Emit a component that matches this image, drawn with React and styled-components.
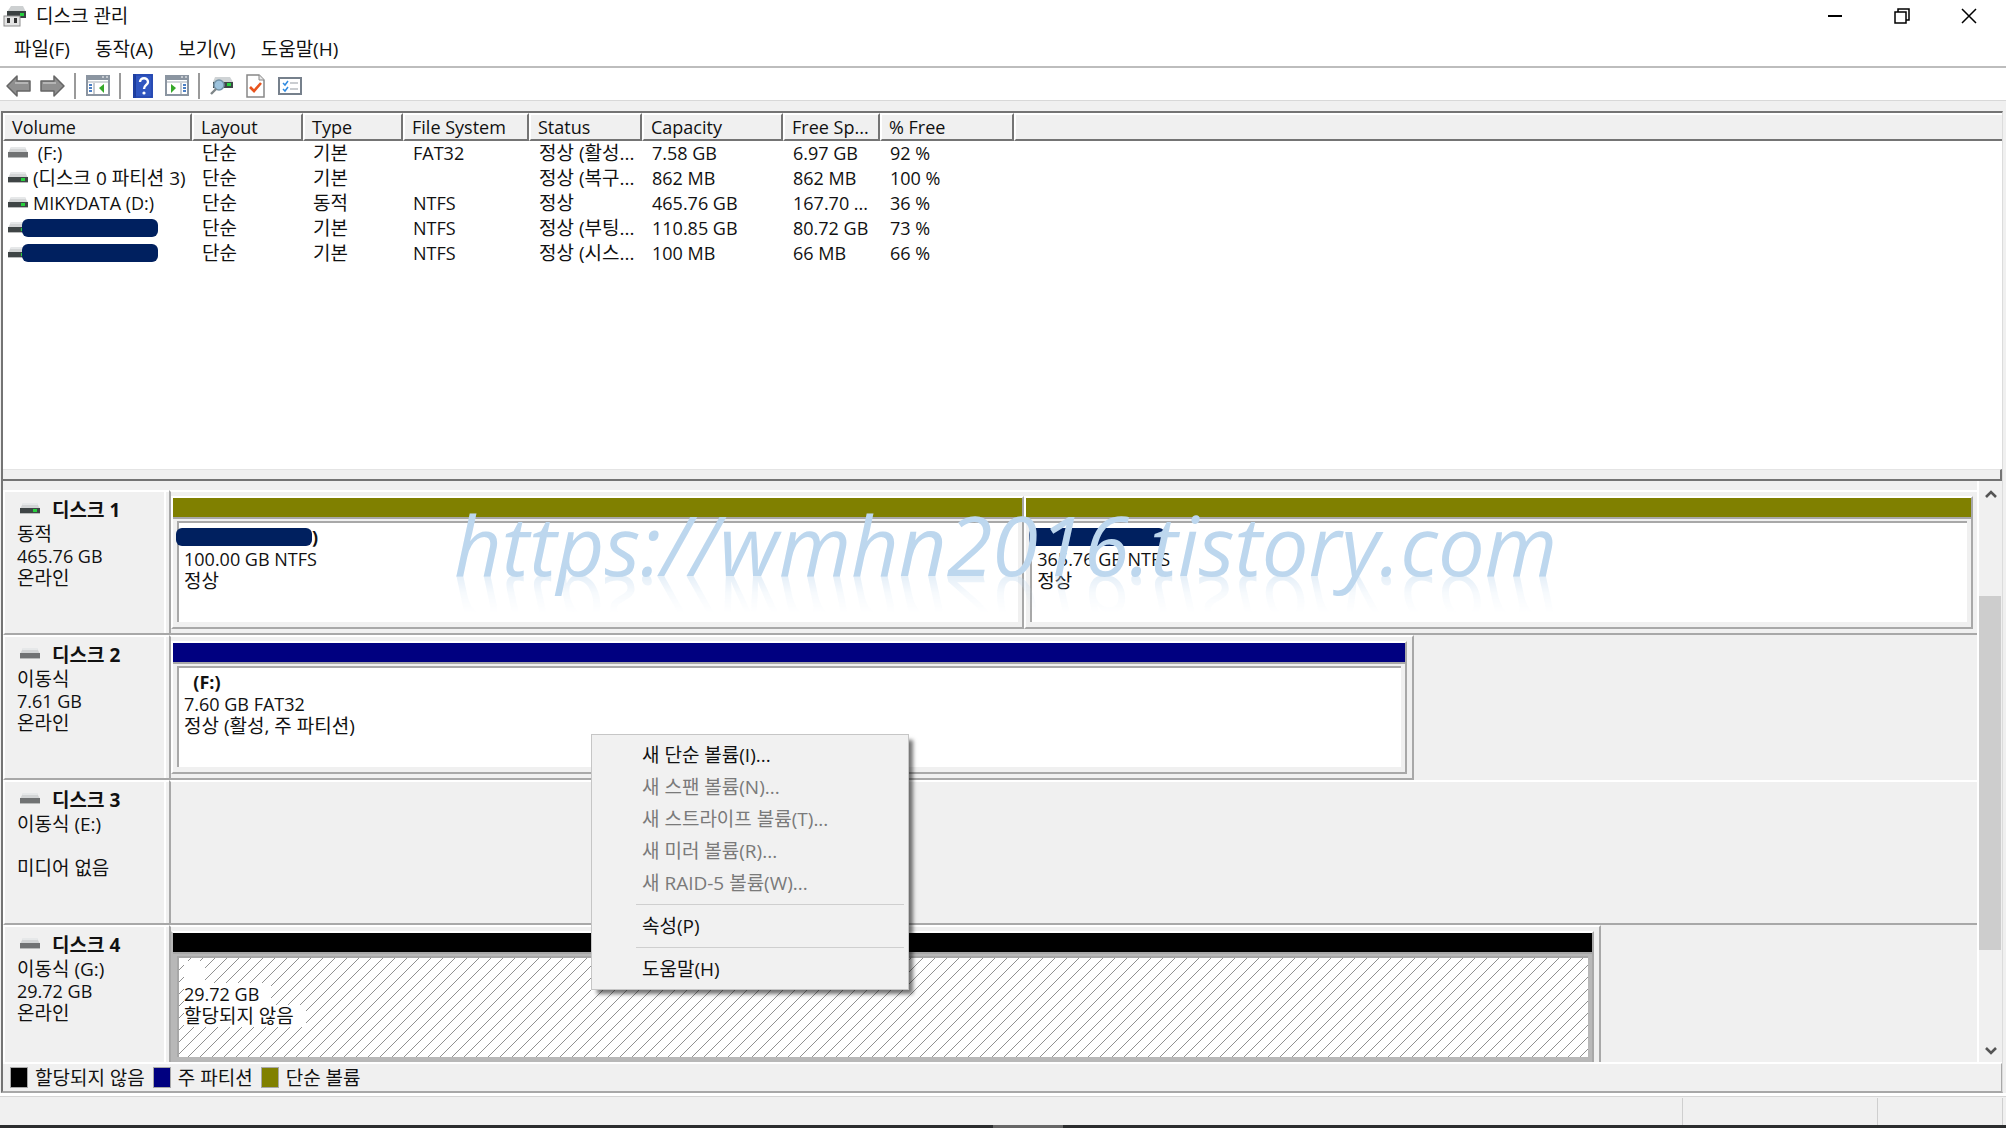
import React from 'react'
import styled, { createGlobalStyle } from 'styled-components'

const colors = {
  face: '#f0f0f0',
  white: '#ffffff',
  text: '#111111',
  disabled: '#7a7a7a',
  line: '#a8a8a8',
  dark: '#747474',
  olive: '#808000',
  navy: '#000080',
  black: '#000000',
  cover: '#00205f',
  watermark: '#bdd7ee',
}

const volumes = [
  { name: '\u00a0(F:)', layout: '단순', type: '기본', fs: 'FAT32', status: '정상 (활성...', capacity: '7.58 GB', free: '6.97 GB', percent: '92 %' },
  { name: '(디스크 0 파티션 3)', lit: true, layout: '단순', type: '기본', fs: '', status: '정상 (복구...', capacity: '862 MB', free: '862 MB', percent: '100 %' },
  { name: 'MIKYDATA (D:)', lit: true, layout: '단순', type: '동적', fs: 'NTFS', status: '정상', capacity: '465.76 GB', free: '167.70 ...', percent: '36 %' },
  { covered: true, lit: true, layout: '단순', type: '기본', fs: 'NTFS', status: '정상 (부팅...', capacity: '110.85 GB', free: '80.72 GB', percent: '73 %' },
  { covered: true, lit: true, layout: '단순', type: '기본', fs: 'NTFS', status: '정상 (시스...', capacity: '100 MB', free: '66 MB', percent: '66 %' },
]

const columns = [
  { label: 'Volume', width: 189 },
  { label: 'Layout', width: 111 },
  { label: 'Type', width: 100 },
  { label: 'File System', width: 126 },
  { label: 'Status', width: 113 },
  { label: 'Capacity', width: 141 },
  { label: 'Free Sp...', width: 97 },
  { label: '% Free', width: 134 },
]

const disks = [
  {
    name: '디스크 1', lit: true, info: ['동적', '465.76 GB', '온라인'], share: 100, rest: 0,
    parts: [
      { share: 854, color: colors.olive, covered: true, title: ')', lines: ['100.00 GB NTFS', '정상'] },
      { share: 950, color: colors.olive, covered: true, title: '', lines: ['365.76 GB NTFS', '정상'] },
    ],
  },
  {
    name: '디스크 2', info: ['이동식', '7.61 GB', '온라인'], share: 1242, rest: 566,
    parts: [{ share: 1, color: colors.navy, title: '\u00a0\u00a0(F:)', lines: ['7.60 GB FAT32', '정상 (활성, 주 파티션)'] }],
  },
  { name: '디스크 3', info: ['이동식 (E:)', '\u00a0', '미디어 없음'], share: 100, rest: 0, parts: [] },
  {
    name: '디스크 4', info: ['이동식 (G:)', '29.72 GB', '온라인'], share: 1430, rest: 378,
    parts: [{ share: 1, color: colors.black, free: true, title: '\u00a0\u00a0', lines: ['29.72 GB', '할당되지 않음'] }],
  },
]

// hangul is set one pixel larger than latin text
const Text = ({ children }) => (
  <TextSpan $hangul={/[가-힣]/.test(children)}>{children}</TextSpan>
)

const DriveIcon = ({ lit }) => (
  <svg width="20" height="13" viewBox="0 0 20 13">
    <path d="M3 1h14l3 6H0z" fill="#d3d5d6" />
    <path d="M3 1h14l1 2H2z" fill="#e6e8e9" />
    <rect x="0" y="6" width="20" height="6" fill={lit ? '#3f4546' : '#707273'} />
    <rect x="0" y="11" width="20" height="1" fill="#b9bbbb" />
    {lit && <rect x="13" y="7" width="4" height="3" fill="#26d03c" />}
  </svg>
)

const AppIcon = () => (
  <svg width="24" height="23" viewBox="0 0 24 23">
    <path d="M8 1h12l3 6H4z" fill="#cdd0d1" />
    <rect x="4" y="6" width="19" height="7" fill="#3b4142" />
    <rect x="17" y="8" width="4" height="3" fill="#25d23e" />
    <rect x="1" y="11" width="16" height="10" fill="#e4e4e4" stroke="#8d8d8d" />
    <rect x="4" y="13" width="3" height="5" fill="#333" />
    <rect x="11" y="13" width="3" height="5" fill="#333" />
  </svg>
)

const ArrowIcon = ({ right }) => (
  <svg width="25" height="24" viewBox="0 0 25 24">
    <path
      d={right ? 'M24 12L14 2v5H1v10h13v5z' : 'M1 12L11 2v5h13v10H11v5z'}
      fill="#8f8f8f" stroke="#666" strokeWidth="1.5" strokeLinejoin="round"
    />
    <path d={right ? 'M3 9h13' : 'M9 9h13'} stroke="#b5b5b5" strokeWidth="2" />
  </svg>
)

const PaneIcon = ({ right }) => (
  <svg width="24" height="21" viewBox="0 0 24 21">
    <rect x="1" y="1" width="22" height="19" fill="#fff" stroke="#8b95a1" strokeWidth="2" />
    <rect x="1" y="1" width="22" height="4" fill="#8b95a1" />
    <path d="M16 2h2M20 2h2" stroke="#fff" />
    <path d="M2 7h20" stroke="#a5adb7" />
    <path d={right ? 'M16 8v12' : 'M8 8v12'} stroke="#8b95a1" />
    <path d={right ? 'M18 10h3M18 13h3M18 16h3' : 'M3 10h3M3 13h3M3 16h3'} stroke="#4c7fc4" strokeWidth="2" />
    <path d={right ? 'M6 9l5 4-5 5z' : 'M18 9l-5 4 5 5z'} fill="#35a829" />
  </svg>
)

const HelpIcon = () => (
  <svg width="20" height="24" viewBox="0 0 20 24">
    <rect width="20" height="24" fill="#2f55c0" />
    <rect width="3" height="24" fill="#1c3c9a" />
    <rect x="1" y="1" width="18" height="22" fill="none" stroke="#2243a8" />
    <path d="M7 8c0-5 8-5 8 0 0 3-4 3-4 7" fill="none" stroke="#fff" strokeWidth="2.4" />
    <circle cx="11" cy="19" r="1.6" fill="#fff" />
  </svg>
)

const SearchDriveIcon = () => (
  <svg width="24" height="21" viewBox="0 0 24 21">
    <path d="M5 2h15l3 5H3z" fill="#cfd3d5" />
    <rect x="3" y="7" width="20" height="6" fill="#3f4748" />
    <rect x="17" y="8" width="4" height="3" fill="#25d23e" />
    <circle cx="9" cy="10" r="5" fill="#9dc3dd" stroke="#7392a6" strokeWidth="1.5" />
    <path d="M6 14l-5 5" stroke="#7e8588" strokeWidth="2.4" />
  </svg>
)

const CheckPageIcon = () => (
  <svg width="19" height="24" viewBox="0 0 19 24">
    <path d="M1 1h12l5 5v17H1z" fill="#fff" stroke="#888" strokeWidth="1.5" />
    <path d="M13 1v5h5" fill="#e8e8e8" stroke="#888" />
    <path d="M4 13l4 4 7-8" fill="none" stroke="#e8541e" strokeWidth="2.6" />
  </svg>
)

const CheckListIcon = () => (
  <svg width="24" height="18" viewBox="0 0 24 18">
    <rect x="1" y="1" width="22" height="16" fill="#fff" stroke="#76808c" strokeWidth="2" />
    <path d="M5 6l2 2 3-4M5 12l2 2 3-4" fill="none" stroke="#2f8ae0" strokeWidth="1.5" />
    <path d="M12 6h8M12 12h8" stroke="#b9bdc2" strokeWidth="1.5" />
  </svg>
)

const MinimizeIcon = () => (
  <svg width="16" height="16" viewBox="0 0 16 16"><path d="M1 8h14" stroke="#000" strokeWidth="2" /></svg>
)

const RestoreIcon = () => (
  <svg width="16" height="16" viewBox="0 0 16 16" fill="none" stroke="#000" strokeWidth="1.5">
    <path d="M1 4h11v11H1z" />
    <path d="M4 4V1h11v11h-3" />
  </svg>
)

const CloseIcon = () => (
  <svg width="16" height="16" viewBox="0 0 16 16"><path d="M1 1l14 14M15 1L1 15" stroke="#000" strokeWidth="1.5" /></svg>
)

const Chevron = ({ down }) => (
  <svg width="12" height="10" viewBox="0 0 12 10">
    <path d={down ? 'M1 2l5 5 5-5' : 'M1 8l5-5 5 5'} fill="none" stroke="#555" strokeWidth="2.6" />
  </svg>
)

const Partition = ({ part }) => (
  <PartitionBox $share={part.share} $free={part.free}>
    <PartitionBar $color={part.color} />
    <PartitionBody $free={part.free}>
      <PartitionLine $bold>
        {part.covered && <Cover />}
        <Text>{part.title}</Text>
      </PartitionLine>
      {part.lines.map(line => (
        <PartitionLine key={line}><Text>{line}</Text></PartitionLine>
      ))}
    </PartitionBody>
  </PartitionBox>
)

const Disk = ({ disk }) => (
  <DiskRow>
    <DiskLabel>
      <h2><DriveIcon lit={disk.lit} /><Text>{disk.name}</Text></h2>
      {disk.info.map(line => <p key={line}><Text>{line}</Text></p>)}
    </DiskLabel>
    <DiskFrame $share={disk.share} $full={disk.rest === 0}>
      {disk.parts.map((part, i) => <Partition key={i} part={part} />)}
    </DiskFrame>
    {disk.rest > 0 && <DiskRest $share={disk.rest} />}
  </DiskRow>
)

const App = () => (
  <Window>
    <GlobalStyle />
    <TitleBar>
      <AppIcon />
      <h1><Text>디스크 관리</Text></h1>
      <WindowButton aria-label="최소화"><MinimizeIcon /></WindowButton>
      <WindowButton aria-label="이전 크기로 복원"><RestoreIcon /></WindowButton>
      <WindowButton aria-label="닫기"><CloseIcon /></WindowButton>
    </TitleBar>
    <MenuBar>
      <button><Text>파일(F)</Text></button>
      <button><Text>동작(A)</Text></button>
      <button><Text>보기(V)</Text></button>
      <button><Text>도움말(H)</Text></button>
    </MenuBar>
    <Toolbar>
      <ToolButton aria-label="뒤로"><ArrowIcon /></ToolButton>
      <ToolButton aria-label="앞으로"><ArrowIcon right /></ToolButton>
      <ToolDivider />
      <ToolButton aria-label="콘솔 트리"><PaneIcon /></ToolButton>
      <ToolDivider />
      <ToolButton aria-label="도움말"><HelpIcon /></ToolButton>
      <ToolButton aria-label="작업 창"><PaneIcon right /></ToolButton>
      <ToolDivider />
      <ToolButton aria-label="디스크 검색"><SearchDriveIcon /></ToolButton>
      <ToolButton aria-label="속성"><CheckPageIcon /></ToolButton>
      <ToolButton aria-label="목록"><CheckListIcon /></ToolButton>
    </Toolbar>

    <Content>
      <VolumePane>
        <VolumeTable>
          <colgroup>
            {columns.map(col => <col key={col.label} width={col.width} />)}
            <col />
          </colgroup>
          <thead>
            <tr>
              {columns.map(col => <th key={col.label}>{col.label}</th>)}
              <th aria-label="빈 열" />
            </tr>
          </thead>
          <tbody>
            {volumes.map((v, i) => (
              <tr key={i}>
                <td>
                  <VolumeName>
                    <DriveIcon lit={v.lit} />
                    {v.covered ? <Cover $overlap /> : <Text>{v.name}</Text>}
                  </VolumeName>
                </td>
                <td><Text>{v.layout}</Text></td>
                <td><Text>{v.type}</Text></td>
                <td>{v.fs}</td>
                <td><Text>{v.status}</Text></td>
                <td>{v.capacity}</td>
                <td>{v.free}</td>
                <td>{v.percent}</td>
                <td />
              </tr>
            ))}
          </tbody>
        </VolumeTable>
      </VolumePane>
      <Splitter />

      <DiskPane>
        <DiskList>
          {disks.map(disk => <Disk key={disk.name} disk={disk} />)}
        </DiskList>
        <Scrollbar>
          <button aria-label="위로"><Chevron /></button>
          <ScrollTrack><ScrollThumb /></ScrollTrack>
          <button aria-label="아래로"><Chevron down /></button>
        </Scrollbar>
        <Watermark>https://wmhn2016.tistory.com</Watermark>
        <ContextMenu>
          <button><Text>새 단순 볼륨(I)...</Text></button>
          <button disabled><Text>새 스팬 볼륨(N)...</Text></button>
          <button disabled><Text>새 스트라이프 볼륨(T)...</Text></button>
          <button disabled><Text>새 미러 볼륨(R)...</Text></button>
          <button disabled><Text>새 RAID-5 볼륨(W)...</Text></button>
          <hr />
          <button><Text>속성(P)</Text></button>
          <hr />
          <button><Text>도움말(H)</Text></button>
        </ContextMenu>
      </DiskPane>

      <Legend>
        <LegendItem $color={colors.black}><Text>할당되지 않음</Text></LegendItem>
        <LegendItem $color={colors.navy}><Text>주 파티션</Text></LegendItem>
        <LegendItem $color={colors.olive}><Text>단순 볼륨</Text></LegendItem>
      </Legend>
    </Content>
    <StatusBar>
      <StatusCell $grow />
      <StatusCell $width={195} />
      <StatusCell $width={125} />
    </StatusBar>
    <TaskbarEdge />
  </Window>
)

export default App

const GlobalStyle = createGlobalStyle`
  * {
    box-sizing: border-box;
  }
  body {
    margin: 0;
    background-color: ${colors.white};
    color: ${colors.text};
    font-family: 'Open Sans', 'Noto Sans CJK KR', sans-serif;
    font-size: 18px;
    line-height: 22px;
  }
  button {
    margin: 0;
    padding: 0;
    border: none;
    background: none;
    color: inherit;
    font: inherit;
  }
  h1, h2, p {
    margin: 0;
    font-size: inherit;
    font-weight: 400;
  }
  svg {
    display: block;
    flex: none;
  }
`;

const TextSpan = styled.span`
  font-size: ${({ $hangul }) => ($hangul ? '19px' : '18px')};
`;

const Window = styled.div`
  min-height: 100vh;
  display: flex;
  flex-direction: column;
  background-color: ${colors.face};
`;

const TitleBar = styled.header`
  height: 32px;
  display: flex;
  align-items: center;
  gap: 9px;
  padding: 0 8px 0 3px;
  background-color: ${colors.white};
  & > h1 {
    flex: 1;
  }
`;

const WindowButton = styled.button`
  width: 58px;
  height: 30px;
  display: flex;
  align-items: center;
  justify-content: center;
`;

const MenuBar = styled.nav`
  height: 34px;
  display: flex;
  align-items: center;
  gap: 25px;
  padding-left: 14px;
  background-color: ${colors.white};
`;

const Toolbar = styled.div`
  height: 35px;
  display: flex;
  align-items: center;
  gap: 9px;
  padding: 3px 0 0 6px;
  background-color: ${colors.white};
  border-top: 2px solid #bdbdbd;
  border-bottom: 1px solid #d8d8d8;
`;

const ToolButton = styled.button`
  min-width: 25px;
  display: flex;
  justify-content: center;
`;

const ToolDivider = styled.i`
  width: 2px;
  height: 26px;
  background-color: #9a9a9a;
`;

const Content = styled.main`
  flex: 1;
  display: flex;
  flex-direction: column;
  margin: 10px 3px 0 1px;
  border-left: 2px solid ${colors.dark};
  border-top: 2px solid ${colors.dark};
  border-bottom: 2px solid ${colors.line};
  border-right: 1px solid #dcdcdc;
`;

const VolumePane = styled.section`
  flex: 1;
  background-color: ${colors.white};
`;

const VolumeTable = styled.table`
  width: 100%;
  table-layout: fixed;
  border-collapse: separate;
  border-spacing: 0;
  & th {
    height: 28px;
    padding: 0 0 0 7px;
    text-align: left;
    font-weight: 400;
    white-space: nowrap;
    background-color: ${colors.face};
    border-top: 2px solid ${colors.white};
    border-left: 2px solid ${colors.white};
    border-right: 2px solid ${colors.dark};
    border-bottom: 2px solid ${colors.dark};
  }
  & th:last-child {
    border-right: none;
  }
  & td {
    height: 25px;
    padding: 0 0 2px 10px;
    white-space: nowrap;
    line-height: 22px;
  }
  & td:first-child {
    padding-left: 5px;
  }
`;

const VolumeName = styled.div`
  display: flex;
  align-items: center;
  gap: 5px;
`;

const Cover = styled.i`
  width: 136px;
  height: 18px;
  flex: none;
  margin-left: ${({ $overlap }) => ($overlap ? '-11px' : '-8px')};
  border-radius: 6px;
  background-color: ${colors.cover};
`;

const Splitter = styled.div`
  height: 12px;
  background-color: ${colors.face};
  border-top: 1px solid #e4e4e4;
  border-bottom: 2px solid ${colors.dark};
  border-right: 2px solid ${colors.dark};
`;

const DiskPane = styled.section`
  position: relative;
  flex: 0 0 582px;
  display: flex;
  border-bottom: 1px solid ${colors.white};
`;

const DiskList = styled.div`
  flex: 1;
  height: 581px;
  padding-top: 9px;
  overflow: hidden;
`;

const DiskRow = styled.article`
  height: 145px;
  display: flex;
`;

const DiskLabel = styled.div`
  flex: 0 0 166px;
  padding: 7px 0 0 12px;
  border-top: 2px solid ${colors.white};
  border-left: 2px solid ${colors.white};
  border-bottom: 2px solid ${colors.line};
  box-shadow: inset -3px 0 ${colors.face}, inset -5px 0 ${colors.white};
  & > h2 {
    display: flex;
    gap: 12px;
    margin-bottom: 2px;
    padding-left: 3px;
    font-weight: 700;
  }
  & > h2 > svg {
    margin-top: 3px;
  }
`;

const DiskFrame = styled.div`
  flex: ${({ $share }) => $share} 1 0;
  display: flex;
  padding: ${({ $full }) => ($full ? '4px 4px 4px 0' : '4px 5px 4px 0')};
  border-top: 2px solid ${colors.white};
  border-left: 2px solid ${colors.line};
  border-right: ${({ $full }) => ($full ? 'none' : `2px solid ${colors.line}`)};
  border-bottom: 2px solid ${colors.line};
`;

const DiskRest = styled.div`
  flex: ${({ $share }) => $share} 1 0;
`;

const PartitionBox = styled.div`
  flex: ${({ $share }) => $share} 1 0;
  display: flex;
  flex-direction: column;
  border-top: 2px solid ${colors.white};
  border-left: 2px solid ${({ $free }) => ($free ? '#b8b8b8' : colors.white)};
  border-right: 2px solid ${colors.line};
  border-bottom: 2px solid ${colors.line};
  background-color: ${({ $free }) => ($free ? '#b8b8b8' : colors.face)};
`;

const PartitionBar = styled.div`
  height: 21px;
  background-color: ${({ $color }) => $color};
  border-bottom: 2px solid ${colors.line};
`;

const PartitionBody = styled.div`
  flex: 1;
  margin: 2px 4px 5px 4px;
  padding: 3px 0 0 5px;
  border-left: 2px solid ${colors.line};
  border-top: 2px solid ${colors.line};
  background-color: ${colors.white};
  ${({ $free }) => $free && `
    background-image: linear-gradient(135deg, transparent 46%, #909090 47%, #909090 53%, transparent 54%);
    background-size: 12px 12px;
    & span {
      padding-right: 12px;
      background-color: ${colors.white};
    }
  `}
`;

const PartitionLine = styled.p`
  display: flex;
  align-items: center;
  height: 22px;
  font-weight: ${({ $bold }) => ($bold ? 700 : 400)};
`;

const Scrollbar = styled.div`
  width: 25px;
  display: flex;
  flex-direction: column;
  border-left: 2px solid ${colors.white};
  & > button {
    height: 26px;
    display: flex;
    align-items: center;
    justify-content: center;
  }
  & > button:last-child {
    height: 22px;
  }
`;

const ScrollTrack = styled.div`
  flex: 1;
  display: flex;
  flex-direction: column;
  padding: 89px 1px 90px 0;
`;

const ScrollThumb = styled.div`
  flex: 1;
  background-color: #cdcdcd;
`;

/* mirrored on the baseline, fading out below it */
const Watermark = styled.div`
  position: absolute;
  left: 451px;
  top: 3px;
  height: 120px;
  line-height: 120px;
  font-size: 83px;
  font-style: italic;
  white-space: nowrap;
  color: ${colors.watermark};
  pointer-events: none;
  -webkit-box-reflect: below -56px linear-gradient(transparent 46%, rgba(0, 0, 0, 0.12) 62%, rgba(0, 0, 0, 0.4) 77%, transparent 78%);
`;

const ContextMenu = styled.div`
  position: absolute;
  left: 588px;
  top: 253px;
  width: 318px;
  padding: 4px 4px 4px 44px;
  background-color: #f1f1f1;
  border: 1px solid #c6c6c6;
  box-shadow: 5px 5px 4px -1px rgba(0, 0, 0, 0.55);
  & > button {
    display: block;
    width: 100%;
    height: 32px;
    padding-left: 6px;
    text-align: left;
  }
  & > button:disabled {
    color: ${colors.disabled};
  }
  & > hr {
    height: 1px;
    margin: 5px 0;
    border: none;
    background-color: #cfcfcf;
  }
`;

const Legend = styled.footer`
  height: 28px;
  display: flex;
  align-items: center;
  gap: 8px;
  padding-left: 7px;
  border-top: 1px solid ${colors.white};
  border-right: 1px solid ${colors.line};
`;

const LegendItem = styled.span`
  display: flex;
  align-items: center;
  gap: 7px;
  &::before {
    content: '';
    width: 16px;
    height: 19px;
    border: 1px solid ${colors.line};
    background-color: ${({ $color }) => $color};
  }
`;

const StatusBar = styled.div`
  height: 32px;
  display: flex;
  padding: 2px 3px 0 0;
  border-top: 3px solid ${colors.white};
  box-shadow: inset 0 1px #d5d5d5;
`;

const StatusCell = styled.div`
  ${({ $grow, $width }) => ($grow ? 'flex: 1;' : `width: ${$width}px;`)}
  border-right: 1px solid #cfcfcf;
`;

const TaskbarEdge = styled.div`
  height: 3px;
  background: linear-gradient(90deg, #2b2d2e 993px, #666 993px, #666 1063px, #2b2d2e 1063px);
`;
